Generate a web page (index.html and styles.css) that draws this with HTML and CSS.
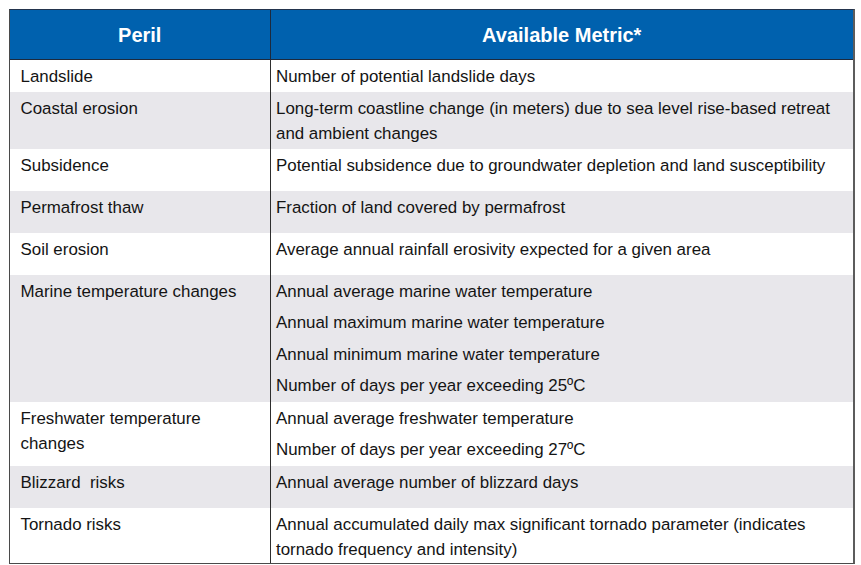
FILE: index.html
```html
<!DOCTYPE html>
<html lang="en">
<head>
<meta charset="utf-8">
<title>Peril metrics</title>
<link rel="stylesheet" href="styles.css">
</head>
<body>
<div class="table">
  <div class="row head">
    <div class="cell">Peril</div>
    <div class="cell metric">Available Metric*</div>
  </div>
  <div class="row short">
    <div class="cell">Landslide</div>
    <div class="cell metric"><p>Number of potential landslide days</p></div>
  </div>
  <div class="row alt">
    <div class="cell">Coastal erosion</div>
    <div class="cell metric"><p>Long-term coastline change (in meters) due to sea level rise-based retreat and ambient changes</p></div>
  </div>
  <div class="row tall">
    <div class="cell">Subsidence</div>
    <div class="cell metric"><p>Potential subsidence due to groundwater depletion and land susceptibility</p></div>
  </div>
  <div class="row alt tall">
    <div class="cell">Permafrost thaw</div>
    <div class="cell metric"><p>Fraction of land covered by permafrost</p></div>
  </div>
  <div class="row tall">
    <div class="cell">Soil erosion</div>
    <div class="cell metric"><p>Average annual rainfall erosivity expected for a given area</p></div>
  </div>
  <div class="row alt">
    <div class="cell">Marine temperature changes</div>
    <div class="cell metric">
      <p>Annual average marine water temperature</p>
      <p>Annual maximum marine water temperature</p>
      <p>Annual minimum marine water temperature</p>
      <p>Number of days per year exceeding 25ºC</p>
    </div>
  </div>
  <div class="row">
    <div class="cell">Freshwater temperature changes</div>
    <div class="cell metric">
      <p>Annual average freshwater temperature</p>
      <p>Number of days per year exceeding 27ºC</p>
    </div>
  </div>
  <div class="row alt tall">
    <div class="cell">Blizzard&nbsp; risks</div>
    <div class="cell metric"><p>Annual average number of blizzard days</p></div>
  </div>
  <div class="row last">
    <div class="cell">Tornado risks</div>
    <div class="cell metric"><p>Annual accumulated daily max significant tornado parameter (indicates tornado frequency and intensity)</p></div>
  </div>
</div>
</body>
</html>
```
FILE: styles.css
```css
html, body {
  margin: 0;
  padding: 0;
  background: #ffffff;
}

body {
  font-family: "Liberation Sans", Arial, sans-serif;
  color: #141414;
  font-size: 16.9px;
}

.table {
  margin: 9px 0 0 9px;
  width: 846px;
  box-sizing: border-box;
  border-left: 1.5px solid #4a4a4a;
  border-right: 2px solid #5c5c5c;
  border-bottom: 1.5px solid #4a4a4a;
  border-top: 1px solid #23344d;
}

.row {
  display: grid;
  grid-template-columns: 259.5px 1fr;
  background: #ffffff;
}

.row.alt {
  background: #e8e7eb;
}

.row.tall {
  min-height: 42px;
}

.cell {
  padding: 4px 20px 3.5px 10.5px;
  line-height: 25px;
}

.cell.metric {
  border-left: 1px solid #2e2e2e;
  padding: 4px 10px 3.5px 5.5px;
}

.row.short .cell {
  padding-bottom: 2.5px;
}

.row.last .cell {
  padding-bottom: 1px;
}

.cell p {
  margin: 0 0 6.4px;
}

.cell p:last-child {
  margin-bottom: 0;
}

.row.head {
  background: #0061ae;
  color: #ffffff;
  height: 50px;
  border-bottom: 1px solid #1d2a3d;
  box-sizing: border-box;
}

.row.head .cell {
  padding: 0;
  display: flex;
  align-items: center;
  justify-content: center;
  font-weight: bold;
  font-size: 20px;
  line-height: 1;
}

.row.head .cell.metric {
  border-left: 1px solid #1d2a3d;
}
```
